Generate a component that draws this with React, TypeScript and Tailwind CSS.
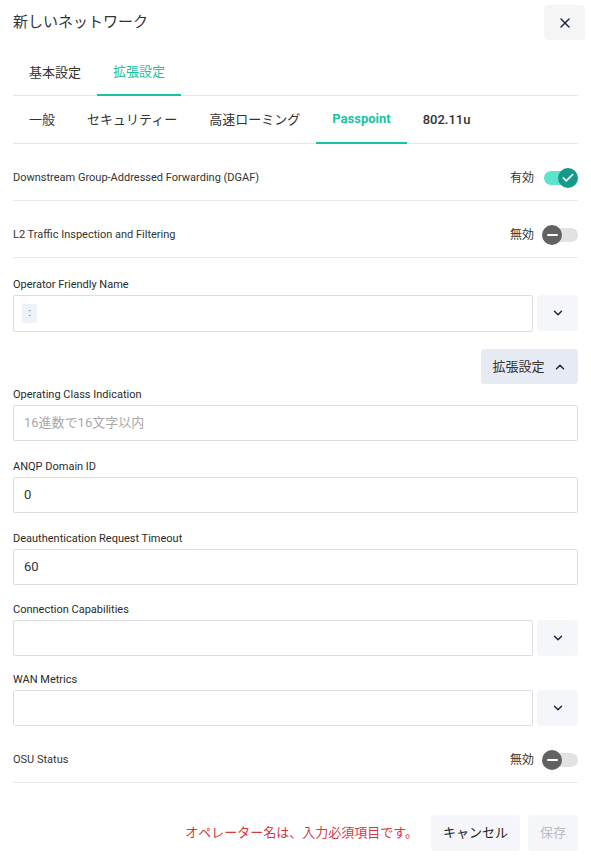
import React from "react";
import { X, ChevronDown, ChevronUp, Check } from "lucide-react";

const font = { fontFamily: 'Roboto, "Noto Sans CJK JP", sans-serif' };

function Toggle({ on }: { on: boolean }) {
  return (
    <div className="relative w-[36px] h-[20px] flex items-center">
      <div className={`absolute h-[14px] rounded-full ${on ? "left-[2px] right-[2px] bg-[#5ee3cc]" : "left-[2px] right-0 bg-[#e2e2e2]"}`} />
      {on ? (
        <div className="absolute right-0 w-[20px] h-[20px] rounded-full bg-[#17998a] flex items-center justify-center">
          <Check size={14} strokeWidth={3} color="#fff" />
        </div>
      ) : (
        <div className="absolute left-0 w-[20px] h-[20px] rounded-full bg-[#626262] flex items-center justify-center">
          <div className="w-[11px] h-[2px] bg-white rounded" />
        </div>
      )}
    </div>
  );
}

function ToggleRow({ label, on }: { label: string; on: boolean }) {
  return (
    <div className="pt-[12px]">
      <div className="h-[45px] flex items-center justify-between border-b border-[#e8e9ee]">
        <span className="text-[11px] text-[#333] pt-[1px]">{label}</span>
        <div className="flex items-center gap-[8px]">
          <span className="text-[12px] text-[#333]">{on ? "有効" : "無効"}</span>
          <Toggle on={on} />
        </div>
      </div>
    </div>
  );
}

function Label({ children }: { children: React.ReactNode }) {
  return <div className="h-[14px] leading-[14px] text-[11px] text-[#2a2a2a] mb-[4px] pt-[1px]">{children}</div>;
}

function ChevBtn() {
  return (
    <div className="w-[41px] h-[36px] rounded bg-[#f5f6fa] flex items-center justify-center shrink-0">
      <ChevronDown size={14} strokeWidth={2.5} color="#1b2440" />
    </div>
  );
}

export default function App() {
  return (
    <div className="w-[591px] h-[863px] bg-white px-[13px] text-[#333]" style={font}>
      {/* header */}
      <div className="pt-[5px] h-[45px] flex items-start justify-between">
        <div className="h-[35px] flex items-center text-[15px] text-[#333]">新しいネットワーク</div>
        <div className="w-[41px] h-[35px] rounded bg-[#f5f5f5] flex items-center justify-center -mr-[7px]">
          <X size={16} strokeWidth={2} color="#1b2440" />
        </div>
      </div>
      {/* main tabs */}
      <div className="flex border-b border-[#e6e6ea] h-[51px]">
        <div className="px-[16px] h-[51px] flex items-center pt-[4px] text-[13px] text-[#333]">基本設定</div>
        <div className="px-[16px] h-[51px] flex items-center pt-[4px] text-[13px] text-[#17c3a3] border-b-2 border-[#17c3a3] -mb-px">拡張設定</div>
      </div>
      {/* sub tabs */}
      <div className="flex border-b border-[#e6e6ea] h-[48px]">
        {["一般", "セキュリティー", "高速ローミング"].map((t) => (
          <div key={t} className="px-[16px] h-[48px] flex items-center text-[13px] text-[#333]">{t}</div>
        ))}
        <div className="px-[16px] h-[48px] flex items-center text-[13px] font-bold text-[#17c3a3] border-b-2 border-[#17c3a3] -mb-px">Passpoint</div>
        <div className="px-[16px] h-[48px] flex items-center text-[13px] font-medium text-[#333]">802.11u</div>
      </div>

      <ToggleRow label="Downstream Group-Addressed Forwarding (DGAF)" on={true} />
      <ToggleRow label="L2 Traffic Inspection and Filtering" on={false} />

      <div className="mt-[19px]">
        <Label>Operator Friendly Name</Label>
        <div className="flex gap-[4px]">
          <div className="flex-1 h-[37px] border border-[#dcdde1] rounded-[2px] flex items-center px-[8px]">
            <div className="w-[15px] h-[19px] rounded-[2px] bg-[#eef1f7] flex items-center justify-center text-[11px] text-[#666]">:</div>
          </div>
          <ChevBtn />
        </div>
      </div>

      <div className="flex justify-end mt-[17px]">
        <div className="w-[97px] h-[35px] rounded bg-[#e6ebf3] flex items-center justify-center gap-[8px] text-[13px] text-[#333]">
          <span>拡張設定</span>
          <ChevronUp size={14} strokeWidth={2.5} color="#1b2440" />
        </div>
      </div>

      <div className="mt-[3px]">
        <Label>Operating Class Indication</Label>
        <div className="h-[36px] border border-[#dcdde1] rounded-[2px] flex items-center px-[10px] text-[13px] text-[#a8a8a8]">16進数で16文字以内</div>
      </div>
      <div className="mt-[18px]">
        <Label>ANQP Domain ID</Label>
        <div className="h-[36px] border border-[#dcdde1] rounded-[2px] flex items-center px-[10px] text-[13px] text-[#333]">0</div>
      </div>
      <div className="mt-[18px]">
        <Label>Deauthentication Request Timeout</Label>
        <div className="h-[36px] border border-[#dcdde1] rounded-[2px] flex items-center px-[10px] text-[13px] text-[#333]">60</div>
      </div>
      <div className="mt-[17px]">
        <Label>Connection Capabilities</Label>
        <div className="flex gap-[4px]">
          <div className="flex-1 h-[36px] border border-[#dcdde1] rounded-[2px]" />
          <ChevBtn />
        </div>
      </div>
      <div className="mt-[16px]">
        <Label>WAN Metrics</Label>
        <div className="flex gap-[4px]">
          <div className="flex-1 h-[36px] border border-[#dcdde1] rounded-[2px]" />
          <ChevBtn />
        </div>
      </div>

      <ToggleRow label="OSU Status" on={false} />

      <div className="mt-[32px] flex justify-end items-center">
        <span className="text-[13px] text-[#d9363e] mr-[13px]">オペレーター名は、入力必須項目です。</span>
        <div className="w-[89px] h-[36px] rounded bg-[#f5f6fa] flex items-center justify-center text-[13px] text-[#222] mr-[8px]">キャンセル</div>
        <div className="w-[50px] h-[36px] rounded bg-[#f5f6fa] flex items-center justify-center text-[13px] text-[#b8bcc4]">保存</div>
      </div>
    </div>
  );
}
